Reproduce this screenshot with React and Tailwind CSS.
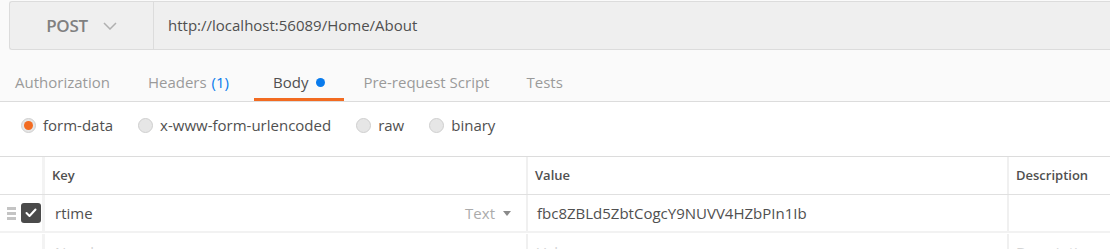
import React from 'react';

const tabs = [
  { label: 'Authorization', cls: 'pl-[15px] pr-[19px]' },
  { label: 'Headers', count: '(1)', cls: 'pl-[19px] pr-[25px]' },
  { label: 'Body', dot: true, active: true, cls: 'pl-[19px] pr-[19px]' },
  { label: 'Pre-request Script', cls: 'pl-[19px] pr-[18px]' },
  { label: 'Tests', cls: 'pl-[19px] pr-[19px]' },
];

const bodyModes = ['form-data', 'x-www-form-urlencoded', 'raw', 'binary'];

function Radio({ checked }) {
  return (
    <span className="w-[15px] h-[15px] rounded-full border border-[#cfcfcf] bg-[#e6e6e6] flex items-center justify-center shrink-0">
      {checked && <span className="w-[9px] h-[9px] rounded-full bg-[#f26b21]" />}
    </span>
  );
}

export default function App() {
  return (
    <div className="w-[1110px] h-[249px] overflow-hidden bg-[#fafafa] text-[#505050]" style={{ fontFamily: '"Open Sans", "Liberation Sans", sans-serif' }}>
      {/* request bar */}
      <div className="pt-px pl-[9px]">
        <div className="h-[49px] flex border border-r-0 border-[#dcdcdc] rounded-l-[3px] bg-[#efefef]">
          <div className="w-[144px] border-r border-[#dcdcdc] flex items-center justify-center gap-[15px]">
            <span className="text-[17px] font-semibold text-[#808080] tracking-[-0.3px]">POST</span>
            <svg width="14" height="8" viewBox="0 0 14 8" fill="none">
              <polyline points="1,1 7,7 13,1" stroke="#b0b0b0" strokeWidth="1.5" />
            </svg>
          </div>
          <div className="flex items-center pl-[14px] text-[15px] text-[#505050]">http://localhost:56089/Home/About</div>
        </div>
      </div>

      {/* tabs */}
      <div className="flex h-[52px] border-b border-[#dcdcdc]">
        {tabs.map((t) => (
          <div
            key={t.label}
            className={`${t.cls} pt-[22px] pb-[6px] border-b-[3px] leading-[20px] text-[15px] flex items-center h-[51px] ${t.active ? 'border-[#f26b21] text-[#505050]' : 'border-transparent text-[#9a9a9a]'}`}
          >
            <span>{t.label}</span>
            {t.count && <span className="ml-[5px] text-[#097bed]">{t.count}</span>}
            {t.dot && <span className="ml-[8px] w-[9px] h-[9px] rounded-full bg-[#097bed]" />}
          </div>
        ))}
      </div>

      {/* body modes */}
      <div className="h-[55px] bg-white border-b border-[#dcdcdc] flex items-center pb-[7px] pl-[21px] gap-[25px] text-[15px]">
        {bodyModes.map((m, i) => (
          <div key={m} className="flex items-center gap-[7px]">
            <Radio checked={i === 0} />
            <span className="text-[#505050]">{m}</span>
          </div>
        ))}
      </div>

      {/* params table */}
      <div className="bg-white">
        <div className="flex h-[38px] border-b border-[#e0e0e0] text-[13px] font-semibold text-[#505050]">
          <div className="w-[45px] border-r-[3px] border-[#f3f3f3]" />
          <div className="w-[481px] flex items-center pl-[7px]">Key</div>
          <div className="w-[481px] border-l-2 border-[#f0f0f0] flex items-center pl-[7px]">Value</div>
          <div className="flex-1 border-l-2 border-[#f0f0f0] flex items-center pl-[7px]">Description</div>
        </div>

        <div className="flex h-[38px] border-b-2 border-[#f2f2f2] text-[15px]">
          <div className="w-[45px] border-r-[3px] border-[#f3f3f3] flex items-center pl-[7px] gap-[5px]">
            <div className="w-[9px] flex flex-col gap-[2px]">
              <span className="h-[3px] bg-[#c4c4c4]" />
              <span className="h-[3px] bg-[#c4c4c4]" />
              <span className="h-[3px] bg-[#c4c4c4]" />
            </div>
            <div className="w-[20px] h-[20px] rounded-[3px] bg-[#4a4a4a] flex items-center justify-center">
              <svg width="12" height="10" viewBox="0 0 12 10" fill="none">
                <polyline points="1.5,5 4.5,8 10.5,1.5" stroke="#fff" strokeWidth="2" strokeLinecap="round" strokeLinejoin="round" />
              </svg>
            </div>
          </div>
          <div className="w-[481px] flex items-center justify-between pl-[10px] pr-[15px]">
            <span className="text-[#505050]">rtime</span>
            <span className="flex items-center gap-[8px] text-[#ababab]">
              Text
              <svg width="8" height="5" viewBox="0 0 8 5"><polygon points="0,0 8,0 4,5" fill="#8a8a8a" /></svg>
            </span>
          </div>
          <div className="w-[481px] border-l-2 border-[#f0f0f0] flex items-center pl-[9px] text-[#505050]">fbc8ZBLd5ZbtCogcY9NUVV4HZbPIn1Ib</div>
          <div className="flex-1 border-l-2 border-[#f0f0f0]" />
        </div>

        <div className="flex h-[38px] pt-[1px] text-[15px] text-[#d4d4d4]">
          <div className="w-[45px] border-r-[3px] border-[#f3f3f3]" />
          <div className="w-[481px] flex items-center pl-[10px]">New key</div>
          <div className="w-[481px] border-l-2 border-[#f0f0f0] flex items-center pl-[9px]">Value</div>
          <div className="flex-1 border-l-2 border-[#f0f0f0] flex items-center pl-[7px]">Description</div>
        </div>
      </div>
    </div>
  );
}
